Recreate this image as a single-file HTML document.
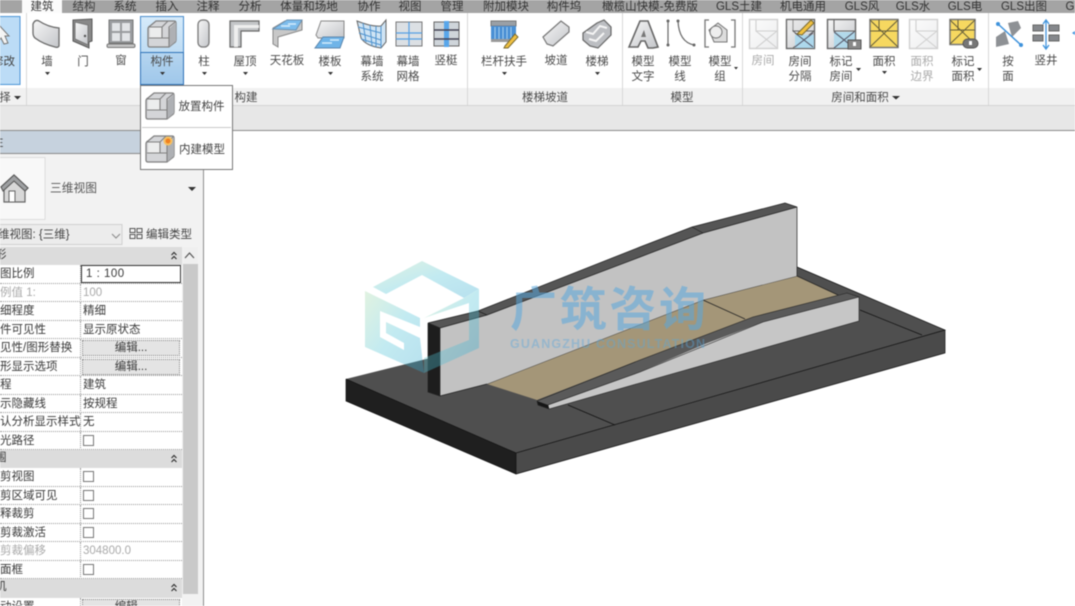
<!DOCTYPE html>
<html lang="zh"><head><meta charset="utf-8"><title>Revit</title>
<style>
html,body{margin:0;padding:0;width:1075px;height:606px;overflow:hidden;background:#fff}
#r{position:absolute;left:0;top:0;width:1075px;height:606px;overflow:hidden;filter:blur(.45px);font-family:"Liberation Sans","Noto Sans CJK SC",sans-serif;color:#3a3a3a}
svg{position:absolute;left:0;top:0}
svg text{font-family:"Liberation Sans","Noto Sans CJK SC",sans-serif}
.b{position:absolute}
.row{position:absolute;left:0;width:182px;height:18.5px;background:#fff;border-bottom:1px dotted #999;box-sizing:border-box;font-size:11.5px;line-height:18px;white-space:nowrap;overflow:hidden}
.row i{font-style:normal;position:absolute;left:-11.5px;top:0;width:92.5px;border-right:1px dotted #999;height:18px;display:block;box-sizing:border-box;overflow:hidden}
.row b{font-weight:normal;position:absolute;left:83px;top:0}
.row u{text-decoration:none;position:absolute;left:82px;top:1px;width:98px;height:16px;background:#e4e4e4;border:1px dotted #888;box-sizing:border-box;text-align:center;line-height:14px}
.row s{position:absolute;left:83px;top:3px;width:11px;height:11px;border:1px solid #777;background:#fff;box-sizing:border-box}
.g{color:#aaa}
.sec{position:absolute;left:0;width:182px;height:18px;background:#dcdcdc;font-size:11.5px;line-height:17px;overflow:hidden}
.sec span{position:absolute;left:-5px;top:0}
.sec em{position:absolute;left:170px;top:4px;width:8px;height:9px;display:block}
</style></head><body><div id="r">
<svg width="1075" height="606" viewBox="0 0 1075 606">
<defs>
<linearGradient id="lg" x1="0" y1="0" x2="1" y2="1"><stop offset="0" stop-color="#f6f6f6"/><stop offset="1" stop-color="#c4c6ca"/></linearGradient>
<linearGradient id="lg2" x1="0" y1="0" x2="0" y2="1"><stop offset="0" stop-color="#e8e8e8"/><stop offset="1" stop-color="#a8aaae"/></linearGradient>
<linearGradient id="wm" x1="0" y1="0" x2="1" y2="1"><stop offset="0" stop-color="#a8dca8"/><stop offset=".5" stop-color="#50c4d8"/><stop offset="1" stop-color="#30a8d0"/></linearGradient>
<linearGradient id="btn" x1="0" y1="0" x2="0" y2="1"><stop offset="0" stop-color="#d6ebfb"/><stop offset="1" stop-color="#bfdcf3"/></linearGradient>
<linearGradient id="btn2" x1="0" y1="0" x2="0" y2="1"><stop offset="0" stop-color="#b5d5f0"/><stop offset="1" stop-color="#9fc7ea"/></linearGradient>
<g id="comp"><path d="M1 10 Q1 8 3 7 L9 2 H27 Q29 2 29 4 V21 Q29 23 27 24 L22 28 H3 Q1 28 1 26 Z" fill="#d4d5d8" stroke="#808080" stroke-width="1.300"/><path d="M3 8 H15 V19 H3 Z" fill="#eceded"/><path d="M22 10 L29 3 V22 L22 28 Z" fill="#aeb0b4"/><path d="M2 8 H15 V19 H2 M15 8 L21 2 M15 19 H22 V8 L28 3 M22 19 V28" fill="none" stroke="#808080" stroke-width="1.100"/></g>
<g id="rm"><rect x=".5" y=".5" width="28" height="29" fill="url(#lg)" stroke="#666" stroke-width="1.400"/><path d="M7 1 V12 H28 M7 12 L28 29 M28 12 L7 29" fill="none" stroke="#666" stroke-width="1.100"/></g>
</defs>

<!-- tabs -->
<rect x="0" y="0" width="1075" height="13" fill="#a4a4a4"/>
<rect x="22" y="0" width="40" height="14" fill="#fbfbfb"/>
<g font-size="11.5" fill="#333" text-anchor="middle">
<text x="42" y="10">建筑</text><text x="84" y="10" fill="#3c3c3c">结构</text><text x="125" y="10">系统</text><text x="167" y="10">插入</text><text x="208" y="10">注释</text><text x="250" y="10">分析</text><text x="309" y="10">体量和场地</text><text x="369" y="10">协作</text><text x="410" y="10">视图</text><text x="452" y="10">管理</text><text x="506" y="10">附加模块</text><text x="564" y="10">构件坞</text><text x="650" y="10">橄榄山快模-免费版</text><text x="739" y="10">GLS土建</text><text x="803" y="10">机电通用</text><text x="862" y="10">GLS风</text><text x="913" y="10">GLS水</text><text x="965" y="10">GLS电</text><text x="1024" y="10">GLS出图</text><text x="1070" y="10">G</text>
</g>

<!-- ribbon -->
<rect x="0" y="13" width="1075" height="75" fill="#fff"/>
<rect x="0" y="88" width="1075" height="17" fill="#f1f1f1"/>
<rect x="0" y="105" width="1075" height="25" fill="#e7e7e7"/>
<path d="M0 105.500H1075" stroke="#d4d4d4"/>
<path d="M26.500 13V105M467.500 13V105M622.500 13V105M742.500 13V105M988.500 13V105" stroke="#d8d8d8"/>

<!-- modify btn -->
<rect x="-5" y="16.500" width="25" height="68" fill="#bcdcf6" stroke="#4b94d6"/>
<path d="M-1 25 L9 36 H5 L8 43 L4 44 L1 38 L-1 41 Z" fill="#f4f4f4" stroke="#777"/>
<text x="15" y="65" font-size="11.5" text-anchor="end" fill="#444">修改</text>

<!-- component btn -->
<rect x="140.500" y="16.500" width="43" height="36" fill="url(#btn)" stroke="#4a8ccc"/>
<rect x="140.500" y="52.500" width="43" height="32" fill="url(#btn2)" stroke="#2f72b8"/>

<!-- icons -->
<path d="M33 24 Q35 19 39 21 Q48 27 59 28 V46 Q58 48 55 47 Q43 44 35 38 Q33 36 33 33 Z" fill="url(#lg)" stroke="#6a6a6a" stroke-width="1.300"/>
<path d="M73 20 L92 19 V41 L89 42 V48 L73 41 Z" fill="#888" stroke="#5a5a5a"/><path d="M75 22 L88 25 V45 L75 39 Z" fill="url(#lg)" stroke="#777"/><circle cx="85" cy="36" r="1.200" fill="#555"/>
<rect x="109" y="20" width="24" height="23" fill="#9a9c9f" stroke="#777"/><rect x="112" y="23" width="8" height="8" fill="#e2e4e7"/><rect x="122" y="23" width="8" height="8" fill="#e2e4e7"/><rect x="112" y="33" width="8" height="8" fill="#e2e4e7"/><rect x="122" y="33" width="8" height="8" fill="#e2e4e7"/><rect x="107" y="44" width="28" height="3.500" rx="1.500" fill="#c4c4c4" stroke="#777"/>
<use href="#comp" x="147" y="19"/>
<rect x="198" y="20" width="11" height="27" rx="4.500" fill="url(#lg)" stroke="#777" stroke-width="1.300"/>
<path d="M230 21 H259 V31 H241 V47 H230 Z" fill="#c4c6c8" stroke="#666" stroke-width="1.200"/><path d="M234 25 H259 V28 H238 V47 H234 Z" fill="#eee"/>
<path d="M273 28 L285 21 H302 V30 L278 37 V47 L273 44 Z" fill="#c8c8c8" stroke="#888"/><path d="M273 29 L287 20 H302 L296 30 Z" fill="#7cbcec" stroke="#6a90b0"/><path d="M281 26 H290 M288 24 H296" stroke="#d5ecfb" stroke-width="1.500"/>
<path d="M321 21 H344 V38 H318 L316 35 Z" fill="url(#lg)" stroke="#888"/><path d="M315 48 L323 37 H344 L340 48 Z" fill="#6fb4e8" stroke="#5b86ad"/><path d="M322 43 H332 M330 40 H339" stroke="#d5ecfb" stroke-width="1.500"/>
<path d="M357 21 Q372 27 381 26 L386 20 V42 L381 48 Q366 46 361 38 Z" fill="#cfe4f4" stroke="#666"/><path d="M363 23 L366 42 M370 25 L372 46 M376 26 V47 M381 26 V48 M358 27 L381 33 M359 33 L381 40 M361 39 L381 45" stroke="#4f93cf" fill="none"/>
<rect x="396" y="22" width="26" height="24" fill="#dce0e4" stroke="#777"/><path d="M396 33 H422 M409 22 V46 M396 39 H422" stroke="#55a0e4" stroke-width="1.200" fill="none"/>
<rect x="434" y="22" width="25" height="24" fill="#cfd5da" stroke="#666"/><rect x="444" y="21" width="5" height="26" fill="#58a6ea"/><path d="M434 30 H459 M434 39 H459" stroke="#445" stroke-width="1.500"/>
<rect x="491" y="21" width="25" height="5" fill="#9aa0a6" stroke="#777"/><rect x="491" y="26" width="25" height="13" fill="#4a90d4"/><path d="M495 27 V39 M499 27 V39 M503 27 V39 M507 27 V39 M511 27 V39" stroke="#a8d0f0"/><rect x="491" y="39" width="21" height="3" fill="#999"/><path d="M505 46 L515 34 L518 37 L508 48 L504 48 Z" fill="#f0c040" stroke="#7a6a30"/>
<path d="M543 37 L561 21 L569 27 V32 L553 46 L547 44 Z" fill="url(#lg)" stroke="#777" stroke-width="1.200"/>
<path d="M583 33 L590 28 L597 23 L604 20 L611 27 V35 L598 48 L590 46 L583 40 Z" fill="#bcbec2" stroke="#666" stroke-width="1.200"/><path d="M586 32 L593 34 L600 26 L607 28 M589 39 L596 41 L604 33" stroke="#f5f5f5" stroke-width="2" fill="none"/>
<path d="M629 47 L640 21 H648 L658 47 L653 48 H648 L645 41 H641 L638 47 Z" fill="url(#lg)" stroke="#666" stroke-width="1.600"/><path d="M641 37 L644 30 L646 37 Z" fill="#777"/>
<circle cx="668" cy="21" r="1.500" fill="#666"/><circle cx="668" cy="45" r="1.500" fill="#666"/><path d="M668 21 V45" stroke="#666" stroke-width="1.200"/><circle cx="678" cy="21" r="1.500" fill="#666"/><circle cx="694" cy="45" r="1.500" fill="#666"/><path d="M678 21 Q679 42 694 45" fill="none" stroke="#666" stroke-width="1.200"/>
<path d="M709 20 H705 V47 H709 M731 20 H735 V47 H731" fill="none" stroke="#777" stroke-width="1.300"/><path d="M709 30 L718 23 L727 30 V42 H714 Z" fill="#ddd" stroke="#777"/><circle cx="716" cy="32" r="6" fill="#eee" stroke="#777"/>

<g opacity=".3"><use href="#rm" x="749" y="19"/></g>
<use href="#rm" x="786" y="19"/><rect x="787" y="20" width="27" height="10" fill="#ddd" opacity=".4"/><rect x="795" y="35" width="19" height="13" fill="#a8d8ee" opacity=".9"/><path d="M795 33 L813 47 M813 33 L795 47" stroke="#556"/><path d="M797 34 L811 20 L814 23 L802 35 Z" fill="#f0c040" stroke="#7a6a30"/>
<use href="#rm" x="827" y="19"/><rect x="834" y="32" width="21" height="16" fill="#a8d8ee" opacity=".8"/><path d="M834 32 L854 48 M854 32 L834 48" stroke="#556"/><rect x="848" y="40" width="13" height="9" fill="#888" stroke="#555"/><rect x="853" y="42" width="3" height="4" fill="#fff"/>
<rect x="870" y="19.500" width="28" height="28" fill="#f6d860" stroke="#777" stroke-width="1.500"/><path d="M870 31 H898 M879 20 V31 M870 20 L898 47 M898 20 L870 47" stroke="#665f3a" fill="none"/>
<g opacity=".3"><use href="#rm" x="909" y="19"/></g>
<rect x="950" y="19.500" width="25" height="25" fill="#f6d860" stroke="#777" stroke-width="1.500"/><path d="M950 30 H975 M958 20 V30 M950 20 L975 44 M975 20 L950 44" stroke="#665f3a" fill="none"/><rect x="963" y="39" width="15" height="9" rx="4.500" fill="#777" stroke="#555"/><rect x="969" y="41" width="3" height="4" fill="#fff"/>
<path d="M1008 23 L1018 21 L1021 28 L1012 37 Z M996 37 L1005 31 L1009 44 L996 47 Z" fill="#8e9195"/><path d="M998 24 L1021 45" stroke="#3f93dc" stroke-width="1.500"/><circle cx="998" cy="24" r="2" fill="#3f93dc"/><circle cx="1021" cy="45" r="2" fill="#3f93dc"/>
<path d="M1033 25 H1043 V31 H1033Z M1049 25 H1059 V31 H1049Z M1033 35 H1043 V41 H1033Z M1049 35 H1059 V41 H1049Z" fill="#85888c" stroke="#666"/><path d="M1046 21 V48 M1043 24 L1046 20 L1049 24 M1043 45 L1046 49 L1049 45" stroke="#3f93dc" stroke-width="1.300" fill="none"/>
<path d="M1075 31 L1072 33 L1075 35Z" fill="#3f93dc"/>

<!-- ribbon labels -->
<g font-size="11.5" fill="#4a4a4a" text-anchor="middle">
<text x="47" y="65">墙</text><text x="83" y="65">门</text><text x="121" y="64">窗</text><text x="162" y="65">构件</text><text x="204" y="65">柱</text><text x="245" y="65">屋顶</text><text x="287" y="64">天花板</text><text x="330" y="65">楼板</text>
<text x="372" y="65">幕墙</text><text x="372" y="80">系统</text><text x="408" y="65">幕墙</text><text x="408" y="80">网格</text><text x="446" y="64">竖梃</text>
<text x="504" y="65">栏杆扶手</text><text x="556" y="64">坡道</text><text x="597" y="65">楼梯</text>
<text x="643" y="65">模型</text><text x="643" y="80">文字</text><text x="680" y="65">模型</text><text x="680" y="80">线</text><text x="720" y="65">模型</text><text x="720" y="80">组</text>
<text x="763" y="64" fill="#aaa">房间</text><text x="800" y="65">房间</text><text x="800" y="80">分隔</text><text x="841" y="65">标记</text><text x="841" y="80">房间</text><text x="884" y="65">面积</text><text x="922" y="65" fill="#aaa">面积</text><text x="922" y="80" fill="#aaa">边界</text><text x="963" y="65">标记</text><text x="963" y="80">面积</text>
<text x="1008" y="65">按</text><text x="1008" y="80">面</text><text x="1046" y="64">竖井</text>
<text x="5" y="101">择</text><text x="246" y="101">构建</text><text x="545" y="101">楼梯坡道</text><text x="682" y="101">模型</text><text x="860" y="101">房间和面积</text>
</g>
<g fill="#333">
<path d="M45 72h5l-2.500 3zM160 72h5l-2.500 3zM202 72h5l-2.500 3zM243 72h5l-2.500 3zM328 72h5l-2.500 3zM502 72h5l-2.500 3zM595 72h5l-2.500 3zM734 67h4l-2 2.500zM856 68h5l-2.500 3zM882 71h5l-2.500 3zM977 68h5l-2.500 3z"/>
<path d="M14 96h7l-3.500 3.500zM892 96h8l-4 3.500z"/>
</g>

<!-- viewport -->
<rect x="0" y="130" width="1075" height="476" fill="#fff"/>
<path d="M0 130.500H1075" stroke="#8c8c8c"/>

<!-- 3D scene -->
<polygon points="346,379 797,267 945,330 516,453" fill="#4f4f4f"/>
<polygon points="346,379 516,453 516,474 346,401" fill="#1f1f1f"/>
<polygon points="516,453 945,330 945,353 516,474" fill="#4a4a4a"/>
<path d="M346 379 L516 453 L945 330 L797 267 M516 453 V474 L945 353 V330 M346 379 V401 L516 474" fill="none" stroke="#111" stroke-width=".7"/>
<path d="M568 405 L615 425 M860 310 L922 335" stroke="#111" stroke-width=".7"/>
<!-- tan -->
<polygon points="487,384 703,300 797,276 838,295 755,317 640,360 537,400" fill="#a49678"/>
<path d="M487 384 L703 300 L797 276 L838 295 M703 300 L745 319" fill="none" stroke="#222" stroke-width=".7"/>
<!-- big wall -->
<polygon points="440,328 640,257 703,233 797,207 797,276 703,300 487,384 440,396" fill="#c2c2c2"/>
<polygon points="428,323 478,311 640,247 692,227 785,203 797,207 703,233 640,257 487,315 440,328" fill="#555"/>
<polygon points="428,323 440,328 440,396 428,392" fill="#1d1d1d"/>
<path d="M428 323 L478 311 L640 247 L692 227 L785 203 L797 207 V276 M428 323 L440 328 L487 315 L640 257 L703 233 L797 207 M440 328 V396 M428 323 V392 L440 396 L487 384 M478 311 L487 315 M692 227 L703 233" fill="none" stroke="#222" stroke-width=".7"/>
<!-- small ramp -->
<polygon points="548,405 660,363 707,343 763,322 859,297 859,321 640,383 549,409" fill="#c6c6c6"/>
<polygon points="537,401 640,360 753,317 847,293 859,297 763,322 707,343 640,372 548,405" fill="#5a5a5a"/>
<polygon points="537,401 548,405 549,409 538,405" fill="#161616"/>
<path d="M537 401 L640 360 L753 317 L847 293 L859 297 V321 L640 383 L549 409 L548 405 L640 372 L763 322 L859 297 M537 401 L538 405 L549 409" fill="none" stroke="#222" stroke-width=".6"/>

<!-- watermark logo -->
<g fill="url(#wm)" opacity=".34">
<polygon points="373,287 422,261 479,289 464,298 422,275 386,294"/>
<polygon points="365,291 420,318 420,327 380,311 380,337 404,350 404,343 386,333 386,322 420,338 424,373 365,347"/>
<polygon points="479,289 464,298 424,318 424,373 479,348 479,289 469,303 469,340 424,358 424,318 469,303"/>
</g>
<text x="510" y="326" font-size="47" font-weight="700" fill="#5aa8dc" fill-opacity=".55" textLength="196" lengthAdjust="spacing">广筑咨询</text>
<text x="510" y="348" font-size="12.5" font-weight="700" fill="#5aa8dc" fill-opacity=".42" textLength="195" lengthAdjust="spacing">GUANGZHU CONSULTATION</text>

<!-- side panel right edge -->
<rect x="0" y="131" width="203" height="475" fill="#f2f2f2"/>
<path d="M203.500 130V606" stroke="#8d8d8d"/>
<rect x="0" y="131" width="203" height="22" fill="#c6d2de"/>
<path d="M0 153.500H203" stroke="#8a8a8a"/>
<text x="-8" y="146" font-size="11.5" fill="#444">性</text>
<rect x="-2" y="157.500" width="47" height="62" fill="#f8f8f8" stroke="#ddd"/>
<path d="M1 187 L14 175 L28 188 L25 191 V202 H4 V190 Z" fill="#d8d8d8" stroke="#666" stroke-width="1.200"/><path d="M1 187 L14 175 L28 188 L25 191 L14 181 L3 191 Z" fill="#9ea0a2" stroke="#555"/><rect x="9" y="191" width="6" height="11" fill="#fff" stroke="#666"/>
<text x="50" y="192" font-size="11.75" fill="#555">三维视图</text>
<path d="M188 187h8l-4 4z" fill="#333"/>
<rect x="-1" y="224.500" width="123" height="20" fill="#ececec" stroke="#d0d0d0"/>
<text x="-2" y="238" font-size="11.5" fill="#444">维视图: {三维}</text>
<path d="M112 234 L116 238 L120 234" fill="none" stroke="#888"/>
<path d="M130 228.500h5v4h-5zM137 228.500h5v4h-5zM130 234.500h5v4h-5zM137 234.500h5v4h-5z" fill="none" stroke="#555"/>
<text x="146" y="238" font-size="11.5" fill="#444">编辑类型</text>
<!-- scrollbar -->
<rect x="183" y="247" width="15" height="347" fill="#c9c9c9"/>
<rect x="183" y="247" width="15" height="17" fill="#efefef"/>
<path d="M185 258 L189.500 253 L194 258" fill="none" stroke="#555" stroke-width="1.200"/>
</svg>

<div class="sec" style="top:247px"><span>形</span><em><svg width="8" height="9"><path d="M1.500 4 L4 1.500 L6.500 4 M1.500 8 L4 5.500 L6.500 8" fill="none" stroke="#333" stroke-width="1.200"/></svg></em></div>
<div class="row" style="top:265px"><i>视图比例</i></div>
<div class="b" style="left:81px;top:265px;width:100px;height:18px;box-sizing:border-box;border:1px solid #333;border-bottom-width:1.500px;background:#fff;font-size:11.5px;line-height:16px;padding-left:4px;letter-spacing:.5px">1 : 100</div>
<div class="row g" style="top:283.500px"><i>比例值 1:</i><b>100</b></div>
<div class="row" style="top:302px"><i>详细程度</i><b>精细</b></div>
<div class="row" style="top:320.500px"><i>零件可见性</i><b>显示原状态</b></div>
<div class="row" style="top:339px"><i>可见性/图形替换</i><u>编辑...</u></div>
<div class="row" style="top:357.500px"><i>图形显示选项</i><u>编辑...</u></div>
<div class="row" style="top:376px"><i>规程</i><b>建筑</b></div>
<div class="row" style="top:394.500px"><i>显示隐藏线</i><b>按规程</b></div>
<div class="row" style="top:413px"><i>默认分析显示样式</i><b>无</b></div>
<div class="row" style="top:431.500px"><i>日光路径</i><s></s></div>
<div class="sec" style="top:450px"><span>围</span><em><svg width="8" height="9"><path d="M1.500 4 L4 1.500 L6.500 4 M1.500 8 L4 5.500 L6.500 8" fill="none" stroke="#333" stroke-width="1.200"/></svg></em></div>
<div class="row" style="top:468px"><i>裁剪视图</i><s></s></div>
<div class="row" style="top:486.500px"><i>裁剪区域可见</i><s></s></div>
<div class="row" style="top:505px"><i>注释裁剪</i><s></s></div>
<div class="row" style="top:523.500px"><i>远剪裁激活</i><s></s></div>
<div class="row g" style="top:542px"><i>远剪裁偏移</i><b>304800.0</b></div>
<div class="row" style="top:560.500px"><i>剖面框</i><s></s></div>
<div class="sec" style="top:579px;height:19px"><span>机</span><em><svg width="8" height="9"><path d="M1.500 4 L4 1.500 L6.500 4 M1.500 8 L4 5.500 L6.500 8" fill="none" stroke="#333" stroke-width="1.200"/></svg></em></div>
<div class="row" style="top:598px"><i>自动设置</i><u>编辑...</u></div>

<!-- dropdown menu -->
<svg width="1075" height="606" viewBox="0 0 1075 606">
<rect x="140.500" y="85.500" width="92" height="84" fill="#fff" stroke="#777"/>
<path d="M142 127.500H231" stroke="#c8c8c8"/>
<use href="#comp" x="145" y="91"/>
<use href="#comp" x="145" y="134"/>
<circle cx="168" cy="141" r="3.500" fill="#f08020" stroke="#f7c060" stroke-width="2"/>
<text x="178.500" y="110" font-size="11.5" fill="#444">放置构件</text>
<text x="179" y="153" font-size="11.5" fill="#444">内建模型</text>
</svg>
</div></body></html>
